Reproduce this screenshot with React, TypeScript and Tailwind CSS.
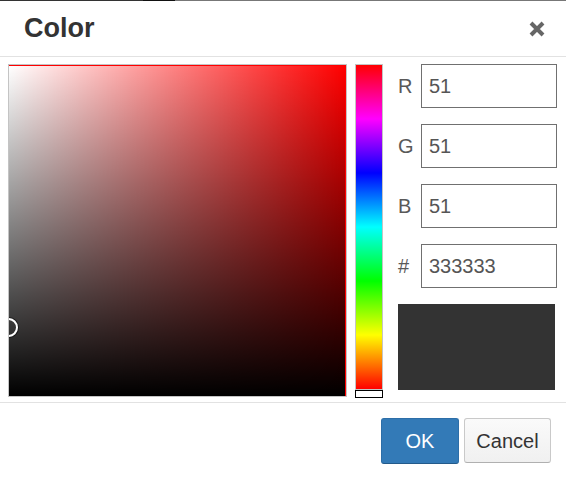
import React from "react";

const channels = [
  { label: "R", value: "51" },
  { label: "G", value: "51" },
  { label: "B", value: "51" },
  { label: "#", value: "333333" },
];

const App = () => {
  return (
    <div className="w-[566px] h-[478px] bg-white overflow-hidden font-['Liberation_Sans',Arial,sans-serif] text-[#333]">
      {/* strip left over from the page behind */}
      <div className="flex h-px">
        <div className="w-[143px] bg-[#333]" />
        <div className="w-[32px] bg-[#111]" />
        <div className="flex-1 bg-[#777]" />
      </div>

      {/* header */}
      <div className="h-[56px] flex items-center justify-between pl-[24px] pr-[20px] border-b border-[#e2e2e2]">
        <h1 className="text-[27px] font-bold leading-none text-[#333]">Color</h1>
        <button className="w-[18px] h-[16px] flex items-center justify-center" aria-label="Close">
          <svg width="18" height="16" viewBox="0 0 18 16">
            <path d="M3 2 L15 14 M15 2 L3 14" stroke="#666" strokeWidth="4" strokeLinecap="butt" />
          </svg>
        </button>
      </div>

      {/* body */}
      <div className="h-[345px] flex pt-[7px] pl-[8px]">
        {/* saturation / value box */}
        <div className="relative w-[339px] h-[333px] border border-[#c4c4c4] overflow-hidden">
          <div className="w-full h-full bg-[#f00] pt-px pr-px">
            <div className="w-full h-full bg-[linear-gradient(to_bottom,rgba(0,0,0,0),#000),linear-gradient(to_right,#fff,rgba(255,255,255,0))]" />
          </div>
          <div className="absolute left-[-10px] top-[253px] w-[19px] h-[19px] rounded-full border-2 border-white shadow-[0_0_0_1px_rgba(0,0,0,0.5)]" />
        </div>

        {/* hue bar */}
        <div className="relative ml-[8px] w-[28px] h-[334px]">
          <div className="w-full h-[326px] border border-[#c4c4c4] bg-[linear-gradient(to_bottom,#f00_0%,#f0f_16.66%,#00f_33.33%,#0ff_50%,#0f0_66.66%,#ff0_83.33%,#f00_100%)]" />
          <div className="w-[28px] h-[8px] border border-black bg-white" />
        </div>

        {/* inputs */}
        <div className="ml-[15px] w-[159px] flex flex-col gap-[16px]">
          {channels.map((c) => (
            <div key={c.label} className="flex items-center h-[44px]">
              <span className="w-[23px] text-[20px] text-[#595959] leading-none">{c.label}</span>
              <input
                readOnly
                value={c.value}
                className="w-[136px] h-[44px] border border-[#707070] px-[7px] text-[20px] text-[#555] outline-none bg-white"
              />
            </div>
          ))}
          <div className="w-[157px] h-[86px] bg-[#333]" />
        </div>
      </div>

      {/* footer */}
      <div className="border-t border-[#e2e2e2] flex justify-end gap-[5px] pt-[15px] pr-[15px]">
        <button className="w-[78px] h-[46px] rounded-[3px] bg-[#337ab7] border border-[#2d6ea8] border-b-[#235a8a] text-white text-[20px]">
          OK
        </button>
        <button className="w-[87px] h-[45px] rounded-[3px] bg-[linear-gradient(to_bottom,#fafafa,#f0f0f0)] border border-[#c9c9c9] border-b-[#b0b0b0] text-[#333] text-[20px]">
          Cancel
        </button>
      </div>
    </div>
  );
};

export default App;
